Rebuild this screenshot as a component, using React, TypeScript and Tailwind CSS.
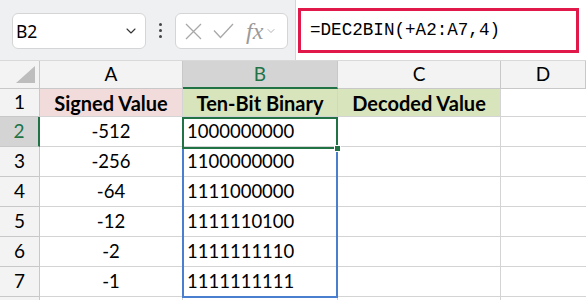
import { ChevronDown } from "lucide-react";

const cols = ["A", "B", "C", "D"];

const rows = [
  { n: 2, a: "-512", b: "1000000000" },
  { n: 3, a: "-256", b: "1100000000" },
  { n: 4, a: "-64", b: "1111000000" },
  { n: 5, a: "-12", b: "1111110100" },
  { n: 6, a: "-2", b: "1111111110" },
  { n: 7, a: "-1", b: "1111111111" },
];

const TopBar = () => {
  return (
    <div className="h-[61px] bg-[#eef0f2] border-b border-[#d9d9d9] flex items-start">
      <div className="mt-[13px] ml-3 w-[134px] h-[36px] bg-white border border-[#d5d5d5] rounded-md flex items-center justify-between pl-[3px] pr-[6px]">
        <span className="text-[17.5px] text-black font-['Noto_Sans',sans-serif]">B2</span>
        <ChevronDown size={16} strokeWidth={1.6} className="text-[#333]" />
      </div>
      <div className="w-[29px] h-full flex flex-col items-center justify-center gap-[3px]">
        <span className="w-[3px] h-[3px] rounded-full bg-[#444]" />
        <span className="w-[3px] h-[3px] rounded-full bg-[#444]" />
        <span className="w-[3px] h-[3px] rounded-full bg-[#444]" />
      </div>
      <div className="mt-[13px] w-[113px] h-[36px] bg-white border border-[#d5d5d5] rounded-md flex items-center pl-[9px]">
        <svg width="17" height="17" viewBox="0 0 17 17">
          <path d="M1 1 L16 16 M16 1 L1 16" stroke="#a8a8a8" strokeWidth="1.3" fill="none" />
        </svg>
        <svg width="21" height="16" viewBox="0 0 21 16" className="ml-[11px]">
          <path d="M1 7.5 L7.5 14.5 L20 1" stroke="#a8a8a8" strokeWidth="1.3" fill="none" />
        </svg>
        <div className="ml-[12px] flex items-center gap-[2px]">
          <span className="text-[24px] leading-none italic text-[#9a9a9a] font-['Liberation_Serif',serif]">fx</span>
          <ChevronDown size={12} strokeWidth={1.5} className="text-[#9a9a9a]" />
        </div>
      </div>
      <div className="ml-[7px] flex-1 h-full bg-white border-l border-[#d5d5d5] pl-[2px] pt-[8px]">
        <div className="w-[281px] h-[45px] border-[3px] border-[#e0194a] flex items-center pl-[9px]">
          <span className="text-[17.6px] text-black font-['Liberation_Mono',monospace]">=DEC2BIN(+A2:A7,4)</span>
        </div>
      </div>
    </div>
  );
};

const Grid = () => {
  return (
    <div className="relative font-['Lato',sans-serif] text-black">
      <div className="grid grid-cols-[40px_143px_155px_163px_1fr]">
        {/* column headers */}
        <div className="h-[28px] bg-[#f3f3f3] border-r border-b border-[#c8c8c8] flex items-end justify-end pr-[4px] pb-[5px]">
          <svg width="19" height="17" viewBox="0 0 19 17">
            <path d="M19 0 L19 17 L0 17 Z" fill="#bdbdbd" />
          </svg>
        </div>
        {cols.map((c) =>
          c === "B" ? (
            <div key={c} className="h-[28px] bg-[#d4d4d4] border-r border-[#c8c8c8] border-b-2 border-b-[#217346] flex items-center justify-center text-[19px] text-[#217346]">
              {c}
            </div>
          ) : (
            <div key={c} className="h-[28px] bg-[#f3f3f3] border-r border-b border-[#c8c8c8] flex items-center justify-center text-[19px]">
              {c}
            </div>
          )
        )}

        {/* row 1 */}
        <div className="h-[28px] bg-[#f3f3f3] border-r border-b border-[#c8c8c8] flex items-center justify-center text-[19px]">
          1
        </div>
        <div className="h-[28px] bg-[#f2dcdb] border-r border-b border-[#d4d4d4] flex items-center justify-center text-[20px] font-bold">
          Signed Value
        </div>
        <div className="h-[28px] bg-[#d8e4bc] border-r border-b border-[#d4d4d4] flex items-center justify-center text-[20px] font-bold">
          Ten-Bit Binary
        </div>
        <div className="h-[28px] bg-[#d8e4bc] border-r border-b border-[#d4d4d4] flex items-center justify-center text-[20px] font-bold">
          Decoded Value
        </div>
        <div className="h-[28px] bg-white border-b border-[#d4d4d4]" />

        {rows.map((r) => (
          <div key={r.n} className="contents">
            {r.n === 2 ? (
              <div className="h-[30px] bg-[#d4d4d4] border-b border-[#c8c8c8] border-r-2 border-r-[#217346] flex items-center justify-center text-[19px] text-[#217346]">
                {r.n}
              </div>
            ) : (
              <div className="h-[30px] bg-[#f3f3f3] border-r border-b border-[#c8c8c8] flex items-center justify-center text-[19px]">
                {r.n}
              </div>
            )}
            <div className="h-[30px] bg-white border-r border-b border-[#d4d4d4] flex items-center justify-center text-[18.5px]">
              {r.a}
            </div>
            <div className="h-[30px] bg-white border-r border-b border-[#d4d4d4] flex items-center pl-[4px] text-[18.5px]">
              {r.b}
            </div>
            <div className="h-[30px] bg-white border-r border-b border-[#d4d4d4]" />
            <div className="h-[30px] bg-white border-b border-[#d4d4d4]" />
          </div>
        ))}

        <div className="h-[30px] bg-[#f3f3f3] border-r border-[#c8c8c8]" />
        <div className="h-[30px] border-r border-[#d4d4d4]" />
        <div className="h-[30px] border-r border-[#d4d4d4]" />
        <div className="h-[30px] border-r border-[#d4d4d4]" />
        <div className="h-[30px]" />
      </div>

      {/* selection range B2:B7 */}
      <div className="absolute left-[182px] top-[56px] w-[156px] h-[181px] border-2 border-[#4a7fd0] pointer-events-none" />
      {/* active cell B2 */}
      <div className="absolute left-[182px] top-[56px] w-[156px] h-[32px] border-2 border-[#217346] pointer-events-none" />
      <div className="absolute left-[334px] top-[84px] w-[7px] h-[7px] bg-[#217346] border border-white" />
    </div>
  );
};

export default function App() {
  return (
    <div className="w-[586px] h-[300px] overflow-hidden bg-white">
      <TopBar />
      <Grid />
    </div>
  );
}
